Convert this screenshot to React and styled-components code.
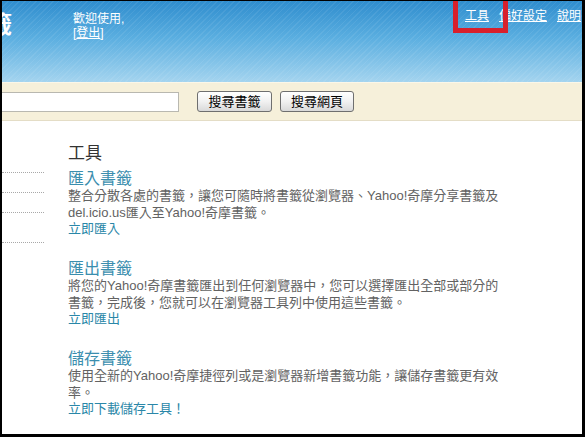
import React from "react";
import styled, { createGlobalStyle } from "styled-components";

const GlobalStyle = createGlobalStyle`
  html, body {
    margin: 0;
    padding: 0;
    background: #ffffff;
  }
`;

const Frame = styled.div`
  width: 585px;
  height: 437px;
  box-sizing: border-box;
  border-style: solid;
  border-color: #000;
  border-width: 1px 3px 3px 2px;
  overflow: hidden;
  background: #fff;
  font-family: "Liberation Sans", "Noto Sans CJK TC", sans-serif;
`;

const Header = styled.div`
  position: relative;
  display: flex;
  align-items: flex-start;
  height: 81px;
  background:
    repeating-linear-gradient(135deg, rgba(255, 255, 255, 0.07) 0 1px, transparent 1px 4px),
    linear-gradient(180deg, #2f8dce 0%, #5aaee0 45%, #a4d4ef 100%);
`;

const LogoClip = styled.div`
  display: flex;
  justify-content: flex-end;
  width: 10px;
  margin-top: 11px;
  overflow: hidden;
`;

const LogoText = styled.span`
  color: #fff;
  font-size: 24px;
  font-weight: bold;
  line-height: 26px;
  white-space: nowrap;
`;

const Welcome = styled.div`
  margin: 11px 0 0 61px;
  color: #fff;
  font-size: 12px;
  line-height: 14px;
`;

const HeadLink = styled.a`
  color: #fff;
  text-decoration: underline;
  cursor: pointer;
`;

const TopLinks = styled.div`
  display: flex;
  gap: 10px;
  margin: 8px 1px 0 auto;
  font-size: 12px;
  line-height: 14px;
`;

const Highlight = styled.div`
  position: absolute;
  left: 451px;
  top: -6px;
  width: 55px;
  height: 38px;
  box-sizing: border-box;
  border: 5px solid #d8202c;
`;

const SearchBand = styled.div`
  display: flex;
  align-items: center;
  height: 37px;
  border-top: 1px solid #fbf7e9;
  border-bottom: 1px solid #e4ddc6;
  background: #f6f0da;
`;

const SearchInput = styled.div`
  width: 179px;
  height: 20px;
  margin-left: -2px;
  box-sizing: border-box;
  border: 1px solid #b9b8b0;
  background: #fff;
`;

const SearchButton = styled.button`
  height: 21px;
  width: ${(p) => p.$w}px;
  margin-left: ${(p) => p.$gap}px;
  padding: 0;
  border: 1px solid #6f6f6f;
  border-radius: 3px;
  background: linear-gradient(180deg, #ffffff 0%, #f1f1f1 50%, #d9d9d9 100%);
  color: #000;
  font-family: "Liberation Sans", "Noto Sans CJK TC", sans-serif;
  font-size: 13px;
  line-height: 19px;
`;

const Main = styled.div`
  display: flex;
  align-items: flex-start;
`;

const Sidebar = styled.div`
  width: 42px;
  padding-top: 32px;
  display: flex;
  flex-direction: column;
`;

const SideItem = styled.div`
  height: ${(p) => p.$h}px;
  border-bottom: 1px dotted #a8a8a8;
`;

const Content = styled.div`
  margin-left: 24px;
  padding-top: 23px;
`;

const PageTitle = styled.h1`
  margin: 0 0 6px;
  color: #333;
  font-family: "Liberation Serif", "Noto Sans CJK TC", serif;
  font-size: 17px;
  font-weight: normal;
  line-height: 20px;
`;

const Section = styled.div`
  margin-bottom: 24px;
`;

const SectionTitle = styled.div`
  color: #3b8eae;
  font-size: 16px;
  line-height: 17px;
`;

const Desc = styled.div`
  color: #626262;
  font-size: 13px;
  line-height: 17px;
  white-space: nowrap;
`;

const ActionLink = styled.a`
  display: block;
  color: #2a87a8;
  font-size: 13px;
  line-height: 15px;
  text-decoration: none;
  cursor: pointer;
`;

const sections = [
  {
    title: "匯入書籤",
    lines: [
      "整合分散各處的書籤，讓您可隨時將書籤從瀏覽器、Yahoo!奇摩分享書籤及",
      "del.icio.us匯入至Yahoo!奇摩書籤。",
    ],
    link: "立即匯入",
  },
  {
    title: "匯出書籤",
    lines: [
      "將您的Yahoo!奇摩書籤匯出到任何瀏覽器中，您可以選擇匯出全部或部分的",
      "書籤，完成後，您就可以在瀏覽器工具列中使用這些書籤。",
    ],
    link: "立即匯出",
  },
  {
    title: "儲存書籤",
    lines: [
      "使用全新的Yahoo!奇摩捷徑列或是瀏覽器新增書籤功能，讓儲存書籤更有效",
      "率。",
    ],
    link: "立即下載儲存工具！",
  },
];

const App = () => {
  return (
    <Frame>
      <GlobalStyle />
      <Header>
        <LogoClip>
          <LogoText>奇摩書籤</LogoText>
        </LogoClip>
        <Welcome>
          歡迎使用,
          <br />[<HeadLink>登出</HeadLink>]
        </Welcome>
        <TopLinks>
          <HeadLink>工具</HeadLink>
          <HeadLink>偏好設定</HeadLink>
          <HeadLink>說明</HeadLink>
        </TopLinks>
        <Highlight />
      </Header>
      <SearchBand>
        <SearchInput />
        <SearchButton $w={75} $gap={18}>
          搜尋書籤
        </SearchButton>
        <SearchButton $w={74} $gap={8}>
          搜尋網頁
        </SearchButton>
      </SearchBand>
      <Main>
        <Sidebar>
          <SideItem $h={19} />
          <SideItem $h={19} />
          <SideItem $h={19} />
          <SideItem $h={29} />
        </Sidebar>
        <Content>
          <PageTitle>工具</PageTitle>
          {sections.map((s) => (
            <Section key={s.title}>
              <SectionTitle>{s.title}</SectionTitle>
              {s.lines.map((l) => (
                <Desc key={l}>{l}</Desc>
              ))}
              <ActionLink>{s.link}</ActionLink>
            </Section>
          ))}
        </Content>
      </Main>
    </Frame>
  );
};

export default App;
